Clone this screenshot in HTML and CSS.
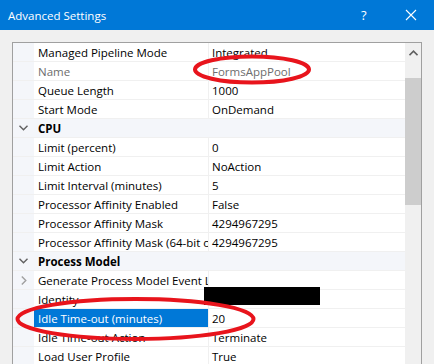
FILE: index.html
```html
<!DOCTYPE html>
<html>
<head>
<meta charset="utf-8">
<link rel="stylesheet" href="styles.css">
</head>
<body>
<div class="window">
  <div class="titlebar">
    <span class="title">Advanced Settings</span>
    <span class="help">?</span>
    <span class="close"><svg width="12" height="12" viewBox="0 0 12 12"><path d="M1 1 L11 11 M11 1 L1 11" stroke="#fff" stroke-width="1.1" fill="none"/></svg></span>
  </div>
  <div class="body">
    <div class="grid">
      <div class="rows">
        <div class="row"><div class="gut"></div><div class="name">Managed Pipeline Mode</div><div class="val">Integrated</div></div>
        <div class="row dim"><div class="gut"></div><div class="name">Name</div><div class="val">FormsAppPool</div></div>
        <div class="row"><div class="gut"></div><div class="name">Queue Length</div><div class="val">1000</div></div>
        <div class="row"><div class="gut"></div><div class="name">Start Mode</div><div class="val">OnDemand</div></div>
        <div class="row cat"><div class="gut"><svg class="chev" width="9" height="6" viewBox="0 0 9 6"><path d="M0.5 0.8 L4.5 4.8 L8.5 0.8" stroke="#606060" stroke-width="1.4" fill="none"/></svg></div><div class="catname">CPU</div></div>
        <div class="row"><div class="gut"></div><div class="name">Limit (percent)</div><div class="val">0</div></div>
        <div class="row"><div class="gut"></div><div class="name">Limit Action</div><div class="val">NoAction</div></div>
        <div class="row"><div class="gut"></div><div class="name">Limit Interval (minutes)</div><div class="val">5</div></div>
        <div class="row"><div class="gut"></div><div class="name">Processor Affinity Enabled</div><div class="val">False</div></div>
        <div class="row"><div class="gut"></div><div class="name">Processor Affinity Mask</div><div class="val">4294967295</div></div>
        <div class="row"><div class="gut"></div><div class="name">Processor Affinity Mask (64-bit option)</div><div class="val">4294967295</div></div>
        <div class="row cat"><div class="gut"><svg class="chev" width="9" height="6" viewBox="0 0 9 6"><path d="M0.5 0.8 L4.5 4.8 L8.5 0.8" stroke="#606060" stroke-width="1.4" fill="none"/></svg></div><div class="catname">Process Model</div></div>
        <div class="row"><div class="gut"><svg class="chev" width="6" height="9" viewBox="0 0 6 9"><path d="M0.8 0.5 L4.8 4.5 L0.8 8.5" stroke="#a0a0a0" stroke-width="1.4" fill="none"/></svg></div><div class="name">Generate Process Model Event Log Entry</div><div class="val"></div></div>
        <div class="row"><div class="gut"></div><div class="name">Identity</div><div class="val"></div></div>
        <div class="row sel"><div class="gut"></div><div class="name">Idle Time-out (minutes)</div><div class="val">20</div></div>
        <div class="row"><div class="gut"></div><div class="name">Idle Time-out Action</div><div class="val">Terminate</div></div>
        <div class="row"><div class="gut"></div><div class="name">Load User Profile</div><div class="val">True</div></div>
      </div>
      <div class="scroll">
        <svg class="up" width="9" height="6" viewBox="0 0 9 6"><path d="M0.5 5.2 L4.5 1.2 L8.5 5.2" stroke="#606060" stroke-width="1.6" fill="none"/></svg>
        <div class="thumb"></div>
      </div>
    </div>
  </div>
  <div class="redact"></div>
  <svg class="marks" width="434" height="364" viewBox="0 0 434 364">
    <ellipse cx="252" cy="69.5" rx="57" ry="13" fill="none" stroke="#e8141c" stroke-width="4"/>
    <ellipse cx="135.5" cy="319" rx="118" ry="20" fill="none" stroke="#e8141c" stroke-width="4"/>
  </svg>
</div>
</body>
</html>
```
FILE: styles.css
```css
* { box-sizing: border-box; }
html, body { margin: 0; padding: 0; }
body {
  width: 434px;
  height: 364px;
  overflow: hidden;
  background: #f0f0f0;
  font-family: "Open Sans", "Noto Sans", sans-serif;
  font-size: 11.5px;
  color: #000;
}
.window { position: relative; width: 434px; height: 364px; overflow: hidden; }
.titlebar {
  height: 30px;
  background: #0078d7;
  color: #fff;
  display: flex;
  align-items: center;
  padding-left: 8px;
  font-size: 11.5px;
}
.title { flex: 1; }
.help { width: 14px; margin-right: 30px; font-size: 13px; }
.close { width: 12px; height: 12px; margin-right: 17px; display: flex; }
.body { padding: 12px 12px 0 12px; }
.grid {
  border: 1px solid #a0a0a0;
  display: flex;
  height: 340px;
  background: #fff;
}
.rows { width: 392px; }
.row {
  display: grid;
  grid-template-columns: 21px 175px 1fr;
  height: 19px;
  border-bottom: 1px solid #f0f0f0;
}
.gut {
  background: #f4f6fa;
  display: flex;
  align-items: center;
  justify-content: center;
}
.name {
  padding-left: 4px;
  line-height: 20px;
  white-space: nowrap;
  overflow: hidden;
  border-right: 1px solid #f0f0f0;
}
.val {
  padding-left: 3px;
  line-height: 20px;
  white-space: nowrap;
  overflow: hidden;
}
.dim .name, .dim .val { color: #6d6d6d; }
.cat { background: #f4f6fa; grid-template-columns: 21px 1fr; }
.catname { padding-left: 4px; line-height: 20px; font-weight: bold; overflow: hidden; }
.sel .name { background: #0078d7; color: #fff; }
.scroll {
  width: 16px;
  background: #f0f0f0;
  display: flex;
  flex-direction: column;
  align-items: center;
}
.up { margin-top: 7px; }
.thumb {
  width: 16px;
  height: 127px;
  background: #cdcdcd;
  margin-top: 22px;
}
.redact {
  position: absolute;
  left: 204px;
  top: 287px;
  width: 116px;
  height: 18px;
  background: #000;
}
.marks { position: absolute; left: 0; top: 0; }
```
